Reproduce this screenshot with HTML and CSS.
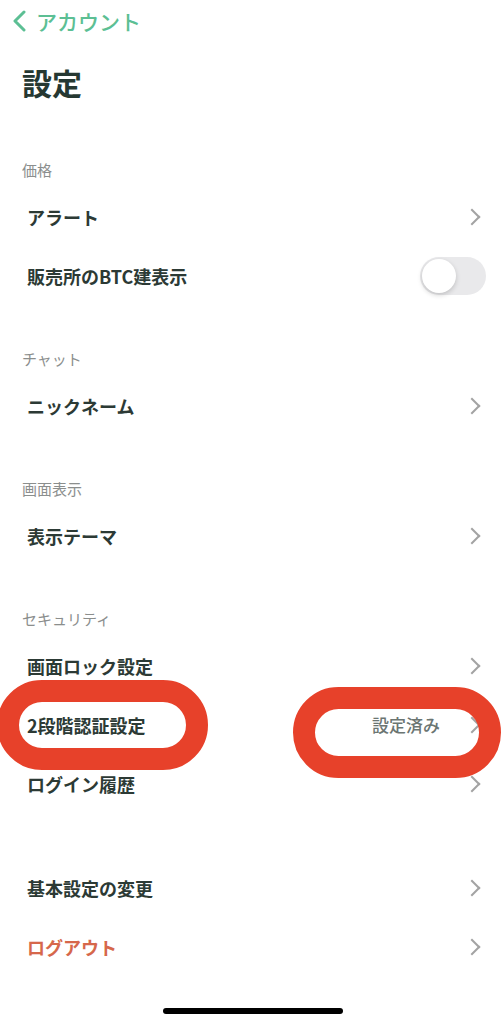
FILE: index.html
```html
<!DOCTYPE html>
<html lang="ja">
<head>
    <meta charset="UTF-8">
    <meta name="viewport" content="width=device-width, initial-scale=1.0">
    <title>設定</title>
    <link rel="stylesheet" href="styles.css">
</head>
<body>
    <div class="page">
        <div class="nav">
            <svg class="back" width="14" height="22" viewBox="0 0 14 22">
                <path d="M12 2 L3 11 L12 20" fill="none" stroke="#5cbf94" stroke-width="3" stroke-linecap="round" stroke-linejoin="round"/>
            </svg>
            <span>アカウント</span>
        </div>
        <h1 class="title">設定</h1>

        <div class="section">
            <div class="label">価格</div>
            <div class="row">
                <span class="name">アラート</span>
                <span class="chev"></span>
            </div>
            <div class="row">
                <span class="name">販売所のBTC建表示</span>
                <span class="toggle"><span class="knob"></span></span>
            </div>
        </div>

        <div class="section">
            <div class="label">チャット</div>
            <div class="row">
                <span class="name">ニックネーム</span>
                <span class="chev"></span>
            </div>
        </div>

        <div class="section">
            <div class="label">画面表示</div>
            <div class="row">
                <span class="name">表示テーマ</span>
                <span class="chev"></span>
            </div>
        </div>

        <div class="section">
            <div class="label">セキュリティ</div>
            <div class="row">
                <span class="name">画面ロック設定</span>
                <span class="chev"></span>
            </div>
            <div class="row">
                <span class="name">2段階認証設定</span>
                <span class="value">設定済み</span>
                <span class="chev"></span>
            </div>
            <div class="row">
                <span class="name">ログイン履歴</span>
                <span class="chev"></span>
            </div>
        </div>

        <div class="section last">
            <div class="row">
                <span class="name">基本設定の変更</span>
                <span class="chev"></span>
            </div>
            <div class="row">
                <span class="name logout">ログアウト</span>
                <span class="chev"></span>
            </div>
        </div>

        <div class="home"></div>

        <!-- hand drawn marks over the screenshot -->
        <div class="mark mark-left"></div>
        <div class="mark mark-right"></div>
    </div>
</body>
</html>
```

FILE: styles.css
```css
body{
    margin: 0;
    background: #fff;
    font-family: "Noto Sans CJK JP", "Noto Sans", sans-serif;
    color: #2c3a35;
}
.page{
    position: relative;
    width: 504px;
    height: 1024px;
    overflow: hidden;
}
.nav{
    display: flex;
    align-items: center;
    gap: 10px;
    height: 42px;
    padding-left: 12px;
    color: #5cbf94;
    font-size: 21px;
    font-weight: 500;
}
.title{
    margin: 0;
    padding: 18px 0 0 22px;
    height: 56px;
    font-size: 30px;
    font-weight: 700;
    line-height: 44px;
    color: #263832;
}
.section{
    padding-top: 37px;
}
.section.last{
    padding-top: 45px;
}
.label{
    height: 34px;
    padding-left: 22px;
    font-size: 15px;
    line-height: 34px;
    color: #8b8e8d;
}
.row{
    display: flex;
    align-items: center;
    height: 59px;
    padding: 0 20px 0 27px;
}
.name{
    flex: 1;
    font-size: 18px;
    font-weight: 700;
}
.logout{
    color: #d6674b;
}
.value{
    margin-right: 26px;
    font-size: 17px;
    font-weight: 500;
    color: #6b7572;
}
.chev{
    width: 10px;
    height: 10px;
    margin-right: 6px;
    border-top: 2px solid #a3a3a3;
    border-right: 2px solid #a3a3a3;
    transform: rotate(45deg);
}
.toggle{
    position: relative;
    width: 66px;
    height: 38px;
    margin-right: -2px;
    border-radius: 19px;
    background: #e9e9eb;
}
.knob{
    position: absolute;
    left: 2px;
    top: 2px;
    width: 34px;
    height: 34px;
    border-radius: 50%;
    background: #fff;
    box-shadow: 0 2px 5px rgba(0,0,0,0.18);
}
.home{
    position: absolute;
    left: 163px;
    bottom: 10px;
    width: 180px;
    height: 6px;
    border-radius: 3px;
    background: #000;
}
.mark{
    position: absolute;
    box-sizing: border-box;
    border: 22px solid #e7412a;
    border-radius: 46px;
}
.mark-left{
    left: -3px;
    top: 680px;
    width: 211px;
    height: 90px;
}
.mark-right{
    left: 293px;
    top: 687px;
    width: 208px;
    height: 91px;
}
```
